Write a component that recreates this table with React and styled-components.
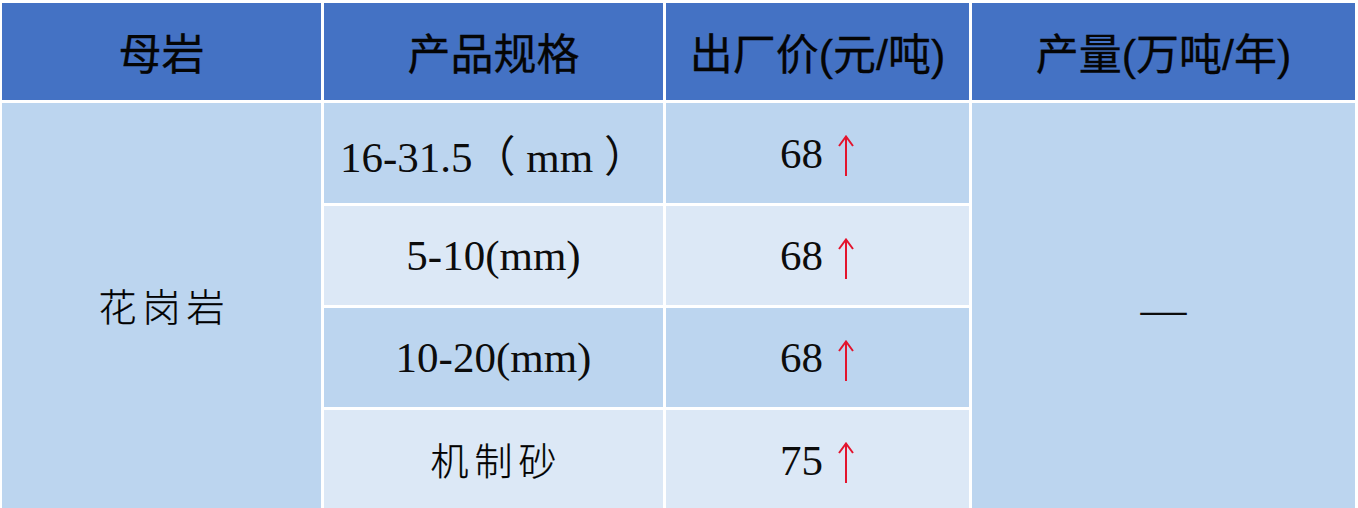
import React from 'react';
import styled, { createGlobalStyle } from 'styled-components';

const Global = createGlobalStyle`
  html, body {
    margin: 0;
    padding: 0;
    background: #ffffff;
    overflow: hidden;
  }
`;

const Table = styled.div`
  display: grid;
  grid-template-columns: 319px 339px 303px 383px;
  grid-template-rows: 97px 100px 99px 99px 100px;
  gap: 3px;
  padding: 3px 3px 0 2px;
  width: 1358px;
  box-sizing: border-box;
  background: #ffffff;
`;

const HeadCell = styled.div`
  display: flex;
  align-items: center;
  justify-content: center;
  background: #4472c4;
  color: #050505;
  font-family: "Liberation Sans", "Noto Sans CJK SC", sans-serif;
  font-size: 43px;
  font-weight: 400;
  -webkit-text-stroke: 0.3px #050505;
  padding-bottom: 2px;
  box-sizing: border-box;
`;

const Cell = styled.div`
  display: flex;
  align-items: center;
  justify-content: center;
  gap: 14px;
  background: ${p => (p.$light ? '#dce8f6' : '#bcd5ef')};
  color: #0c0c0c;
  font-family: "Liberation Serif", "Noto Sans CJK SC", serif;
  font-size: 43px;
  grid-row: ${p => p.$span || 'auto'};
  grid-column: ${p => p.$col || 'auto'};
`;

const Cjk = styled.span`
  font-family: "Noto Sans CJK SC", sans-serif;
  font-size: 38px;
  font-weight: 300;
  color: #000;
  -webkit-text-stroke: 0.25px #000;
  letter-spacing: 6px;
  margin-right: -6px;
  margin-bottom: 4px;
`;

const Dash = styled.span`
  font-family: "Liberation Serif", serif;
  font-size: 46px;
  margin-top: 6px;
`;

const UpArrow = () => (
  <svg width="18" height="42" viewBox="0 0 18 42" style={{ marginTop: 6 }}>
    <path d="M9 2 V41 M2 11 L9 1.5 L16 11" stroke="#e3142d" strokeWidth="2" fill="none" />
  </svg>
);

const rows = [
  { spec: '16-31.5（ mm ）', price: '68', light: false },
  { spec: '5-10(mm)', price: '68', light: true },
  { spec: '10-20(mm)', price: '68', light: false },
  { spec: '机制砂', price: '75', light: true, cjk: true },
];

export default function App() {
  return (
    <>
      <Global />
      <Table>
        <HeadCell>母岩</HeadCell>
        <HeadCell>产品规格</HeadCell>
        <HeadCell>出厂价(元/吨)</HeadCell>
        <HeadCell>产量(万吨/年)</HeadCell>

        <Cell $col="1" $span="2 / span 4">
          <Cjk>花岗岩</Cjk>
        </Cell>
        {rows.map((r, i) => (
          <React.Fragment key={i}>
            <Cell $col="2" $light={r.light}>
              {r.cjk ? <Cjk>{r.spec}</Cjk> : r.spec}
            </Cell>
            <Cell $col="3" $light={r.light}>
              {r.price}
              <UpArrow />
            </Cell>
          </React.Fragment>
        ))}
        <Cell $col="4" $span="2 / span 4">
          <Dash>—</Dash>
        </Cell>
      </Table>
    </>
  );
}
